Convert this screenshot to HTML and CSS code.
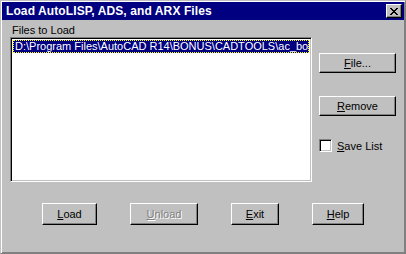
FILE: index.html
```html
<!DOCTYPE html>
<html>
<head>
<meta charset="utf-8">
<link rel="stylesheet" href="styles.css">
</head>
<body>
<div class="window">
  <div class="titlebar">
    <span class="title">Load AutoLISP, ADS, and ARX Files</span>
    <span class="close-btn">
      <svg width="8" height="7" viewBox="0 0 8 7" shape-rendering="crispEdges">
        <path d="M0 0h2v1h-2zM6 0h2v1h-2zM1 1h2v1h-2zM5 1h2v1h-2zM2 2h4v1h-4zM3 3h2v1h-2zM2 4h4v1h-4zM1 5h2v1h-2zM5 5h2v1h-2zM0 6h2v1h-2zM6 6h2v1h-2z" fill="#000"/>
      </svg>
    </span>
  </div>
  <div class="content">
    <div class="main">
      <div class="left">
        <div class="label">Files to Load</div>
        <div class="listbox">
          <div class="item selected">D:\Program Files\AutoCAD R14\BONUS\CADTOOLS\ac_bonus.lsp</div>
        </div>
      </div>
      <div class="right">
        <div class="btn side"><span><u>F</u>ile...</span></div>
        <div class="btn side"><span><u>R</u>emove</span></div>
        <label class="check"><span class="box"></span><span><u>S</u>ave List</span></label>
      </div>
    </div>
    <div class="bottom">
      <div class="btn b-load"><span><u>L</u>oad</span></div>
      <div class="btn b-unload disabled"><span><u>U</u>nload</span></div>
      <div class="btn b-exit"><span><u>E</u>xit</span></div>
      <div class="btn b-help"><span><u>H</u>elp</span></div>
    </div>
  </div>
</div>
</body>
</html>
```

FILE: styles.css
```css
* { box-sizing: border-box; }
html, body { margin: 0; padding: 0; }
body {
  width: 406px;
  height: 254px;
  overflow: hidden;
  background: #c0c0c0;
  font-family: "Liberation Sans", Arial, sans-serif;
  font-size: 11px;
  color: #000;
}
.window {
  width: 406px;
  height: 254px;
  background: #c0c0c0;
  border: 1px solid;
  border-color: #c0c0c0 #808080 #808080 #c0c0c0;
  box-shadow: inset 1px 1px #fff, inset -1px -1px #808080;
  padding: 1px;
  display: flex;
  flex-direction: column;
}
.titlebar {
  height: 18px;
  background: #000080;
  color: #fff;
  display: flex;
  align-items: center;
  justify-content: space-between;
  padding: 0 2px 0 4px;
}
.title {
  font-weight: bold;
  font-size: 12px;
  letter-spacing: 0.1px;
}
.close-btn {
  width: 16px;
  height: 14px;
  background: #c0c0c0;
  border: 1px solid;
  border-color: #fff #000 #000 #fff;
  box-shadow: inset -1px -1px #808080;
  display: flex;
  align-items: center;
  justify-content: center;
  padding-right: 1px;
}
.close-btn svg { display: block; }
.content {
  flex: 1;
  padding: 4px 0 0 8px;
}
.main {
  display: flex;
}
.left {
  width: 302px;
}
.label {
  height: 13px;
  line-height: 13px;
  padding-left: 2px;
}
.listbox {
  height: 145px;
  background: #fff;
  border: 1px solid;
  border-color: #808080 #fff #fff #808080;
  box-shadow: inset 1px 1px #000, inset -1px -1px #c0c0c0;
  padding: 2px;
  overflow: hidden;
}
.item {
  height: 13px;
  line-height: 12px;
  white-space: nowrap;
  overflow: hidden;
  padding-left: 2px;
}
.item.selected {
  background: #000080;
  color: #fff;
  outline: 1px dotted #ffff00;
  outline-offset: -1px;
}
.right {
  margin-left: 7px;
  padding-top: 29px;
  display: flex;
  flex-direction: column;
}
.btn {
  background: #c0c0c0;
  border: 1px solid;
  border-color: #fff #000 #000 #fff;
  box-shadow: inset -1px -1px #808080;
  display: flex;
  align-items: center;
  justify-content: center;
  line-height: 13px;
}
.btn u { text-decoration: underline; text-underline-offset: 1px; }
.btn.side {
  width: 77px;
  height: 20px;
  margin-bottom: 23px;
}
.check {
  display: flex;
  align-items: center;
  gap: 5px;
  height: 13px;
}
.box {
  width: 13px;
  height: 13px;
  background: #fff;
  border: 1px solid;
  border-color: #808080 #fff #fff #808080;
  box-shadow: inset 1px 1px #000, inset -1px -1px #c0c0c0;
}
.bottom {
  display: flex;
  gap: 33px;
  margin-top: 21px;
  padding-left: 32px;
}
.bottom .btn { height: 22px; }
.b-load { width: 55px; }
.b-unload { width: 68px; }
.b-exit { width: 48px; }
.b-help { width: 52px; }
.btn.disabled {
  color: #808080;
  text-shadow: 1px 1px 0 #fff;
}
```
